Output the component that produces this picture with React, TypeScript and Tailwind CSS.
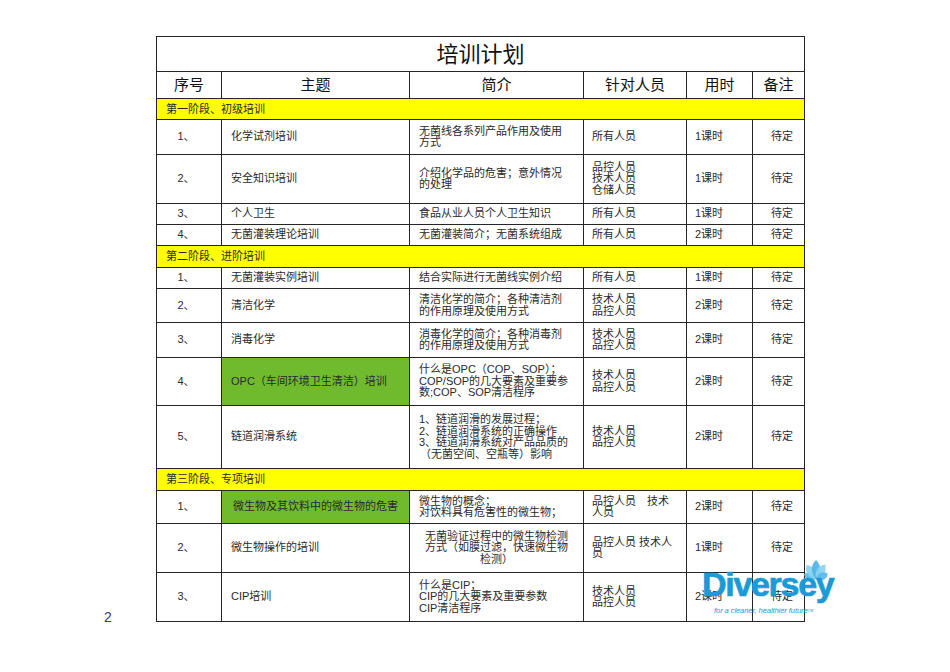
import React from 'react';

type Row = {
  no: string;
  topic: React.ReactNode;
  desc: React.ReactNode;
  who: React.ReactNode;
  time: string;
  green?: boolean;
  center?: boolean;
  descCenter?: boolean;
};

const stage1: Row[] = [
  { no: '1、', topic: '化学试剂培训', desc: <>无菌线各系列产品作用及使用<br />方式</>, who: '所有人员', time: '1课时' },
  { no: '2、', topic: '安全知识培训', desc: <>介绍化学品的危害；意外情况<br />的处理</>, who: <>品控人员<br />技术人员<br />仓储人员</>, time: '1课时' },
  { no: '3、', topic: '个人卫生', desc: '食品从业人员个人卫生知识', who: '所有人员', time: '1课时' },
  { no: '4、', topic: '无菌灌装理论培训', desc: '无菌灌装简介；无菌系统组成', who: '所有人员', time: '2课时' },
];

const stage2: Row[] = [
  { no: '1、', topic: '无菌灌装实例培训', desc: '结合实际进行无菌线实例介绍', who: '所有人员', time: '1课时' },
  { no: '2、', topic: '清洁化学', desc: <>清洁化学的简介；各种清洁剂<br />的作用原理及使用方式</>, who: <>技术人员<br />品控人员</>, time: '2课时' },
  { no: '3、', topic: '消毒化学', desc: <>消毒化学的简介；各种消毒剂<br />的作用原理及使用方式</>, who: <>技术人员<br />品控人员</>, time: '2课时' },
  { no: '4、', topic: 'OPC（车间环境卫生清洁）培训', green: true, desc: <>什么是OPC（COP、SOP）；<br />COP/SOP的几大要素及重要参<br />数;COP、SOP清洁程序</>, who: <>技术人员<br />品控人员</>, time: '2课时' },
  { no: '5、', topic: '链道润滑系统', desc: <>1、链道润滑的发展过程；<br />2、链道润滑系统的正确操作<br />3、链道润滑系统对产品品质的<br /><span className="pl-[1px]">（无菌空间、空瓶等）影响</span></>, who: <>技术人员<br />品控人员</>, time: '2课时' },
];

const stage3: Row[] = [
  { no: '1、', topic: '微生物及其饮料中的微生物的危害', green: true, center: true, desc: <>微生物的概念；<br />对饮料具有危害性的微生物；</>, who: <>品控人员　技术<br />人员</>, time: '2课时' },
  { no: '2、', topic: '微生物操作的培训', descCenter: true, desc: <>无菌验证过程中的微生物检测<br />方式（如膜过滤，快速微生物<br />检测）</>, who: <>品控人员 技术人<br />员</>, time: '1课时' },
  { no: '3、', topic: 'CIP培训', desc: <>什么是CIP；<br />CIP的几大要素及重要参数<br />CIP清洁程序</>, who: <>技术人员<br />品控人员</>, time: '2课时' },
];

const cell = 'border-r border-b border-[#262626] flex items-center text-[11px] leading-[11.5px] text-[#2a2a2a]';
const head = 'border-r border-b border-[#262626] flex items-center justify-center text-[15px] text-[#111]';
const stage = 'col-span-6 border-r border-b border-[#262626] bg-[#ffff00] flex items-center pl-[9px] text-[11px] text-[#2a2a2a]';

function Stage({ title }: { title: string }) {
  return <div className={stage}>{title}</div>;
}

function Rows({ rows }: { rows: Row[] }) {
  return (
    <>
      {rows.map((r, i) => (
        <React.Fragment key={i}>
          <div className={`${cell} justify-center pr-[6px]`}>{r.no}</div>
          <div
            className={`${cell} ${r.green ? 'bg-[#70bb2d]' : ''} ${r.center ? 'justify-center' : 'pl-[9px]'}`}
          >
            {r.topic}
          </div>
          <div className={`${cell} ${r.descCenter ? 'justify-center text-center' : 'pl-[9px]'}`}>
            <div>{r.desc}</div>
          </div>
          <div className={`${cell} pl-[8px]`}>
            <div>{r.who}</div>
          </div>
          <div className={`${cell} pl-[8px]`}>{r.time}</div>
          <div className={`${cell} justify-end pr-[11px]`}>待定</div>
        </React.Fragment>
      ))}
    </>
  );
}

function Logo() {
  // lotus petals above "ey"
  const petals = [
    { a: -68, l: 13, w: 5, c: '#56bbe8' },
    { a: -34, l: 17, w: 5.5, c: '#8ad2f1' },
    { a: 0, l: 19, w: 5.5, c: '#4db5e6' },
    { a: 32, l: 17, w: 5.5, c: '#8ad2f1' },
    { a: 66, l: 13, w: 5, c: '#56bbe8' },
  ];
  return (
    <div className="absolute left-[702px] top-[553px] w-[134px] h-[64px] pointer-events-none">
      <svg className="absolute left-[92px] top-[3px]" width="44" height="24" viewBox="0 0 44 24">
        {petals.map((p, i) => (
          <path
            key={i}
            transform={`translate(22 23) rotate(${p.a})`}
            d={`M0 0 C ${-p.w} ${-p.l * 0.35} ${-p.w} ${-p.l * 0.72} 0 ${-p.l} C ${p.w} ${-p.l * 0.72} ${p.w} ${-p.l * 0.35} 0 0 Z`}
            fill={p.c}
            opacity="0.92"
          />
        ))}
      </svg>
      <div className="absolute left-0 top-[14px] font-['Liberation_Sans',sans-serif] font-bold text-[34px] leading-[34px] tracking-[-1.3px] text-[#1b9ad7] [-webkit-text-stroke:0.7px_#1b9ad7]">
        Diversey
      </div>
      <div className="absolute left-[12px] top-[53px] font-['Liberation_Sans',sans-serif] italic text-[7.6px] leading-[9px] text-[#1b9ad7] whitespace-nowrap tracking-[-0.1px]">
        for a cleaner, healthier future<span className="text-[4px] align-top">TM</span>
      </div>
    </div>
  );
}

export default function App() {
  return (
    <div className="relative w-[950px] h-[672px] bg-white font-['Liberation_Sans','Noto_Sans_CJK_SC',sans-serif]">
      <div className="flex pt-[36px]">
        <div className="w-[156px] flex items-end pl-[104px]">
          <span className="text-[14px] leading-[10px] text-[#2b3a8c]">2</span>
        </div>
        <div className="grid grid-cols-[65px_188px_174px_103px_66px_52px] grid-rows-[35px_27px_21px_35px_49px_21px_21px_22px_21px_34px_35px_48px_63px_22px_33px_49px_49px] border-t border-l border-[#262626]">
          <div className="col-span-6 border-r border-b border-[#262626] flex items-center justify-center text-[22px] text-[#111]">
            培训计划
          </div>
          <div className={head}>序号</div>
          <div className={head}>主题</div>
          <div className={head}>简介</div>
          <div className={head}>针对人员</div>
          <div className={head}>用时</div>
          <div className={head}>备注</div>
          <Stage title="第一阶段、初级培训" />
          <Rows rows={stage1} />
          <Stage title="第二阶段、进阶培训" />
          <Rows rows={stage2} />
          <Stage title="第三阶段、专项培训" />
          <Rows rows={stage3} />
        </div>
      </div>
      <Logo />
    </div>
  );
}
